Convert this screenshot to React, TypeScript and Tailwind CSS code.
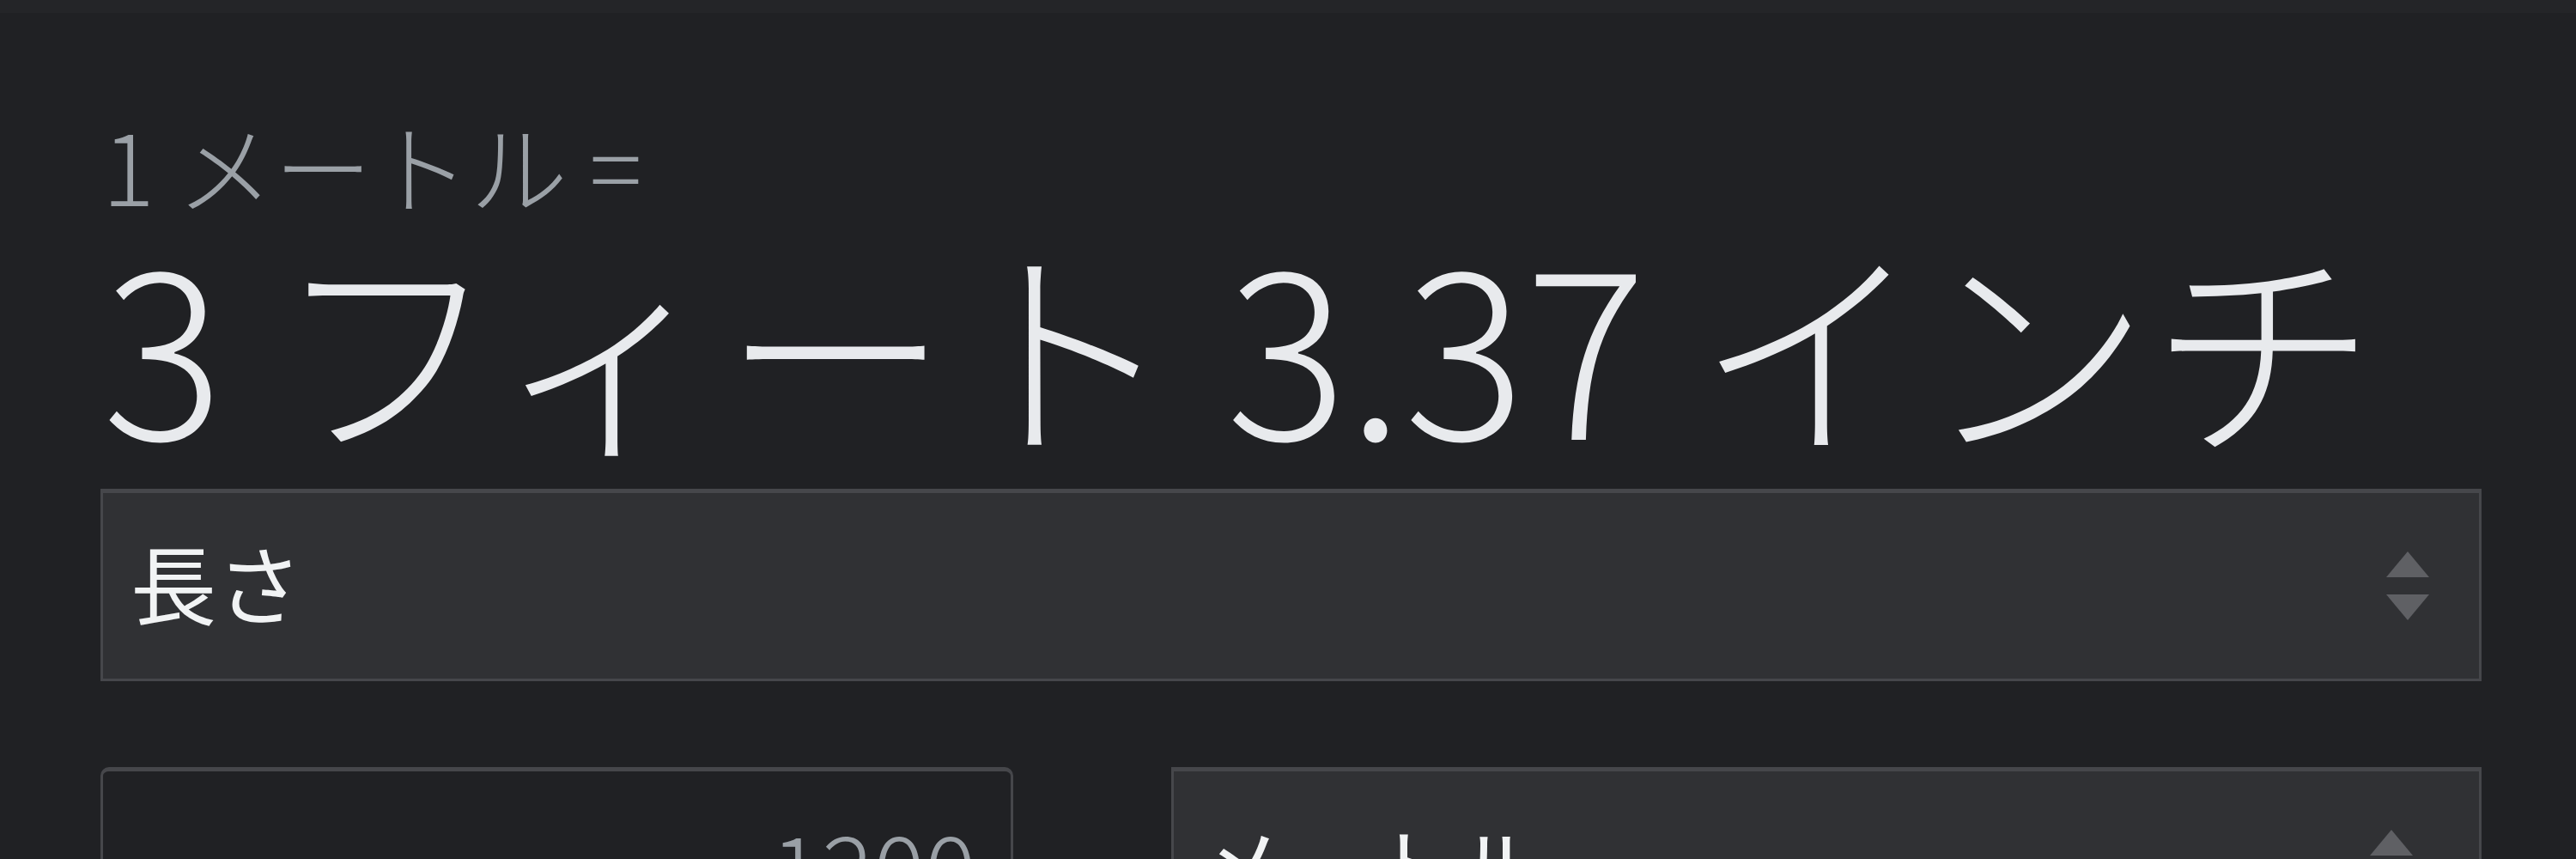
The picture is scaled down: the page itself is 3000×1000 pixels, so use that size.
import { useState } from "react";

const font = { fontFamily: '"Noto Sans CJK JP", "Noto Sans", sans-serif' };

function Arrows({ className = "" }: { className?: string }) {
  return (
    <svg width="50" height="80" viewBox="0 0 50 80" className={className}>
      <polygon points="25,0 50,30 0,30" fill="#5f6064" />
      <polygon points="0,50 50,50 25,80" fill="#5f6064" />
    </svg>
  );
}

export default function App() {
  const [value] = useState("1200");

  return (
    <div className="w-[3000px] h-[1000px] overflow-hidden bg-[#202124]" style={font}>
      {/* top strip */}
      <div className="h-[15px] bg-[#242528]" />

      <div className="pl-[117px] pr-[110px]">
        {/* Heading */}
        <div className="pl-[2px] pt-[116px] text-[114px] leading-[120px] font-light text-[#9aa0a6]">
          1 メートル =
        </div>
        <div className="pl-[2px] mt-[11px] text-[264px] leading-[270px] font-light text-[#e8eaed] whitespace-nowrap">
          3 フィート 3.37 インチ
        </div>

        {/* Unit type select */}
        <div className="mt-[37px] h-[224px] flex items-center justify-between border-[3px] border-[#46474b] border-t-[5px] bg-[#303134] pl-[32px] pr-[58px]">
          <span className="mb-[10px] text-[100px] text-[#f1f3f4]">長さ</span>
          <Arrows />
        </div>

        {/* Value + unit */}
        <div className="mt-[100px] flex gap-[184px]">
          <div className="w-[1063px] h-[224px] shrink-0 flex items-center justify-end rounded-[10px] border-[3px] border-t-[5px] border-[#46474b] pr-[40px]">
            <span className="text-[112px] font-light text-[#9aa0a6]">{value}</span>
          </div>
          <div className="flex-1 h-[224px] flex items-center justify-between border-[3px] border-t-[5px] border-[#46474b] bg-[#303134] pl-[30px] pr-[77px]">
            <span className="text-[100px] text-[#f1f3f4]">メートル</span>
            <Arrows />
          </div>
        </div>
      </div>
    </div>
  );
}
